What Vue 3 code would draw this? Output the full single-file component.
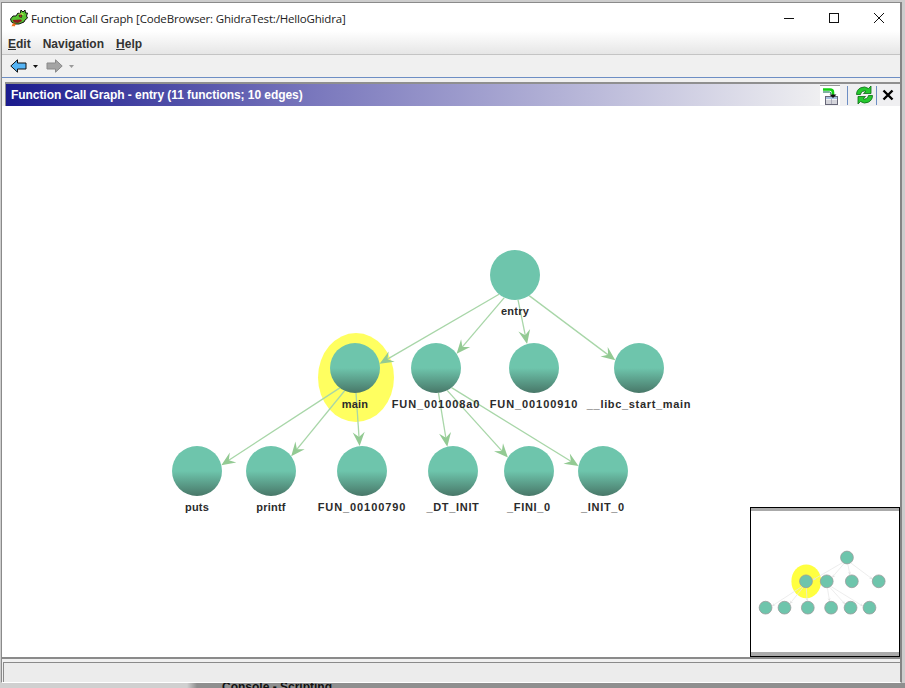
<script setup>
const nodes = {
  entry: { x: 515, y: 275, label: "entry", flat: true },
  main: { x: 355, y: 368, label: "main" },
  fun8a0: { x: 436, y: 368, label: "FUN_001008a0", kind: "addr" },
  fun910: { x: 534, y: 368, label: "FUN_00100910", kind: "addr" },
  libc: { x: 639, y: 368, label: "__libc_start_main", kind: "wide" },
  puts: { x: 197, y: 471, label: "puts" },
  printf: { x: 271, y: 471, label: "printf" },
  fun790: { x: 362, y: 471, label: "FUN_00100790", kind: "addr" },
  dtInit: { x: 453, y: 471, label: "_DT_INIT", kind: "wide" },
  fini: { x: 529, y: 471, label: "_FINI_0", kind: "wide" },
  init: { x: 603, y: 471, label: "_INIT_0", kind: "wide" },
};

const links = [
  ["entry", "main"],
  ["entry", "fun8a0"],
  ["entry", "fun910"],
  ["entry", "libc"],
  ["main", "puts"],
  ["main", "printf"],
  ["main", "fun790"],
  ["fun8a0", "dtInit"],
  ["fun8a0", "fini"],
  ["fun8a0", "init"],
];

const RADIUS = 25;
// edges aim at the middle of circle + label, not the circle itself
const LABEL_SHIFT = 10;

// distance along the ray to a circle: side -1 is where it enters, +1 where it leaves
function hitCircle(px, py, ux, uy, node, side) {
  const dx = node.x - px;
  const dy = node.y - py;
  const along = dx * ux + dy * uy;
  const off = dx * dx + dy * dy - along * along;
  return along + side * Math.sqrt(Math.max(0, RADIUS * RADIUS - off));
}

const edges = links.map(([from, to]) => {
  const a = nodes[from];
  const b = nodes[to];
  const ax = a.x;
  const ay = a.y + LABEL_SHIFT;
  const len = Math.hypot(b.x - a.x, b.y - a.y);
  const ux = (b.x - a.x) / len;
  const uy = (b.y - a.y) / len;
  const start = hitCircle(ax, ay, ux, uy, a, 1);
  const tipDist = hitCircle(ax, ay, ux, uy, b, -1);
  const tx = ax + ux * tipDist;
  const ty = ay + uy * tipDist;
  const point = (along, side) =>
    `${(tx - ux * along - uy * side).toFixed(1)},${(ty - uy * along + ux * side).toFixed(1)}`;
  return {
    id: from + to,
    x1: ax + ux * start,
    y1: ay + uy * start,
    x2: tx - ux * 8,
    y2: ty - uy * 8,
    arrow: [point(0, 0), point(14, 6), point(9, 0), point(14, -6)].join(" "),
  };
});

const nodeList = Object.values(nodes);
</script>

<template>
  <div class="desktop">
    <div class="window">
      <div class="titlebar">
        <svg class="dragon" width="18" height="18" viewBox="0 0 18 18">
          <path d="M0.500 10 L3 7 L6 7 L8 4 L10 5 L11 1 L13 3 L15 1 L15.500 4 L17.500 4 L16.500 7 L17.500 9 L15 11 L14 13 L9 15 L5 15 L1.500 13 Z" fill="#58c432" stroke="#111" />
          <path d="M8 5 L12 4 L14 6 L11 7 Z" fill="#b8e84a" />
          <path d="M9 6 L12 6 L11.500 8.500 L9.500 8 Z" fill="#c83a20" stroke="#111" stroke-width=".6" />
          <path d="M2.500 11 L11 10.500 L12 12 L8 14 L4 13.500 Z" fill="#8a1c1c" />
          <path d="M3 14 L1.500 17.500 L3 17 L4.500 17.500 L6 15 Z" fill="#f0701e" />
        </svg>
        <span class="title-text">Function Call Graph [CodeBrowser: GhidraTest:/HelloGhidra]</span>
        <div class="win-buttons">
          <svg width="12" height="12" viewBox="0 0 12 12"><path d="M1 6.500 H11" stroke="#111" /></svg>
          <svg width="12" height="12" viewBox="0 0 12 12"><rect x="1.500" y="1.500" width="9" height="9" fill="none" stroke="#111" /></svg>
          <svg width="12" height="12" viewBox="0 0 12 12"><path d="M1 1 L11 11 M11 1 L1 11" stroke="#111" /></svg>
        </div>
      </div>

      <div class="menubar">
        <span class="menu-item"><u>E</u>dit</span>
        <span class="menu-item">Navigation</span>
        <span class="menu-item"><u>H</u>elp</span>
      </div>

      <div class="toolbar">
        <svg width="17" height="14" viewBox="0 0 17 14">
          <path d="M.8 7 L7.500 .8 V4 H16 V10 H7.500 V13.200 Z" fill="#55b4f5" stroke="#111" />
        </svg>
        <svg class="caret" width="5" height="3" viewBox="0 0 5 3"><path d="M0 0 H5 L2.500 3 Z" fill="#111" /></svg>
        <svg class="forward" width="17" height="14" viewBox="0 0 17 14">
          <path d="M16.200 7 L9.500 .8 V4 H1 V10 H9.500 V13.200 Z" fill="#a4a4a4" stroke="#8a8a8a" />
        </svg>
        <svg class="caret" width="5" height="3" viewBox="0 0 5 3"><path d="M0 0 H5 L2.500 3 Z" fill="#999" /></svg>
      </div>

      <div class="panel-head">
        <div class="panel-title">Function Call Graph - entry (11 functions; 10 edges)</div>
        <div class="panel-actions">
          <div class="action-box">
            <svg width="17" height="18" viewBox="0 0 17 18">
              <rect x="3.500" y="9.500" width="12" height="8" fill="#f4f4f4" stroke="#667" />
              <rect x="4" y="10" width="11" height="2" fill="#a8c0e0" />
              <path d="M4 14 H15 M4 16 H15 M9.500 12 V17" stroke="#99a" stroke-width=".7" />
              <path d="M1 2.500 H8 Q11 2.500 11 5.500 V8" fill="none" stroke="#12d012" stroke-width="2.600" />
              <path d="M1 5 H7.500 Q9 5 9 7" fill="none" stroke="#064" />
              <path d="M7.500 7.500 H14.500 L11 11 Z" fill="#111" />
            </svg>
          </div>
          <div class="action-sep"></div>
          <svg class="refresh" width="19" height="20" viewBox="0 0 19 20">
            <path d="M1.500 9.500 A7.500 7.500 0 0 1 13.500 3.500 L16 1 V8.500 H8.500 L11 6.300 A4 4 0 0 0 5.500 9.500 Z" fill="#25c82e" stroke="#0a6a14" stroke-width=".8" />
            <path d="M17.500 10.500 A7.500 7.500 0 0 1 5.500 16.500 L3 19 V11.500 H10.500 L8 13.700 A4 4 0 0 0 13.500 10.500 Z" fill="#25c82e" stroke="#0a6a14" stroke-width=".8" />
          </svg>
          <div class="action-sep action-sep--last"></div>
          <svg class="close-x" width="12" height="12" viewBox="0 0 12 12">
            <path d="M1.500 1.500 L10.500 10.500 M10.500 1.500 L1.500 10.500" stroke="#000" stroke-width="2.400" />
          </svg>
        </div>
      </div>

      <div class="canvas">
        <svg class="graph" width="898" height="551" viewBox="2 106 898 551">
          <defs>
            <linearGradient id="node-shade" x1="0" y1="0" x2="0" y2="1">
              <stop offset="0.5" stop-color="#6ec5ac" />
              <stop offset="1" stop-color="#487768" />
            </linearGradient>
          </defs>
          <ellipse cx="356" cy="377.500" rx="38" ry="44.500" fill="#ffff60" />
          <g v-for="edge in edges" :key="edge.id">
            <line class="edge-line" :x1="edge.x1" :y1="edge.y1" :x2="edge.x2" :y2="edge.y2" />
            <polygon class="edge-arrow" :points="edge.arrow" />
          </g>
          <g v-for="node in nodeList" :key="node.label">
            <circle :cx="node.x" :cy="node.y" r="25" :fill="node.flat ? '#6ec5ac' : 'url(#node-shade)'" />
            <text
              class="node-label"
              :class="node.kind && 'node-label--' + node.kind"
              :x="node.x"
              :y="node.y + 40"
            >{{ node.label }}</text>
          </g>
        </svg>

        <div class="satellite">
          <svg width="148" height="141" viewBox="751 510.500 148 141">
            <g transform="translate(806 557) scale(.256) translate(-355 -275)">
              <ellipse cx="356" cy="368" rx="58" ry="66" fill="#ffff40" />
              <g v-for="edge in edges" :key="edge.id">
                <line class="mini-line" :x1="edge.x1" :y1="edge.y1" :x2="edge.x2" :y2="edge.y2" />
                <polygon class="mini-arrow" :points="edge.arrow" />
              </g>
              <circle
                v-for="node in nodeList"
                :key="node.label"
                :cx="node.x"
                :cy="node.y"
                r="25"
                fill="#6ec5ac"
                stroke="#9a9a9a"
                stroke-width="3"
              />
            </g>
          </svg>
        </div>
      </div>

      <div class="statusbar">
        <div class="status-box"></div>
      </div>
    </div>

    <div class="behind">
      <span class="behind-title">Console - Scripting</span>
    </div>
  </div>
</template>

<style scoped>
.desktop {
  width: 905px;
  height: 688px;
  overflow: hidden;
  display: flex;
  flex-direction: column;
  padding-top: 2px;
  box-sizing: border-box;
  background: #cdcdcd;
  font-family: "Liberation Sans", Arial, sans-serif;
}

.window {
  width: 901px;
  height: 681px;
  margin-left: 1px;
  box-sizing: border-box;
  flex-shrink: 0;
  display: flex;
  flex-direction: column;
  background: #f0f0f0;
  border-top: 1px solid #8a8a8a;
  border-left: 1px solid #8a8a8a;
  border-right: 2px solid #858585;
  border-bottom: 1px solid #fff;
}

.titlebar {
  height: 28px;
  flex-shrink: 0;
  display: flex;
  align-items: center;
  box-sizing: border-box;
  background: #fff;
  padding: 2px 0 0 8px;
}

.dragon {
  margin-right: 3px;
}

.title-text {
  font-family: "Open Sans", sans-serif;
  font-size: 11.5px;
  letter-spacing: -0.17px;
  color: #222;
}

.win-buttons {
  margin-left: auto;
  display: flex;
  gap: 33px;
  padding-right: 15px;
}

.menubar {
  height: 24px;
  flex-shrink: 0;
  display: flex;
  align-items: center;
  gap: 12px;
  padding: 3px 0 0 6px;
  box-sizing: border-box;
  background: linear-gradient(#fff, #e6e6e6);
  border-bottom: 1px solid #c4c4c4;
}

.menu-item {
  font-size: 12px;
  font-weight: 700;
  color: #333;
}

.toolbar {
  height: 23px;
  flex-shrink: 0;
  display: flex;
  align-items: center;
  box-sizing: border-box;
  padding-left: 8px;
  border-bottom: 1px solid #6d8ec4;
}

.caret {
  margin-left: 6px;
}

.forward {
  margin-left: 8px;
}

.panel-head {
  height: 24px;
  margin: 4px 0 0 3px;
  flex-shrink: 0;
  display: flex;
  box-sizing: border-box;
  border-top: 2px solid #8f8f8f;
  border-left: 1px solid #8f8f8f;
}

.panel-title {
  flex: 1;
  display: flex;
  align-items: center;
  padding-left: 5px;
  font-size: 12px;
  font-weight: 700;
  letter-spacing: -0.06px;
  color: #fff;
  background: linear-gradient(90deg, #1b1b8e, #7a78bd 38%, #efeff1);
}

.panel-actions {
  width: 80px;
  display: flex;
  align-items: center;
  background: #efeff1;
}

.action-box {
  width: 20px;
  height: 20px;
  display: flex;
  align-items: center;
  justify-content: center;
  background: #fff;
  border-top: 1px solid #999;
  box-sizing: border-box;
}

.action-sep {
  width: 1px;
  height: 19px;
  background: #6d8ec4;
  margin-left: 7px;
}

.action-sep--last {
  margin-left: 2px;
}

.refresh {
  margin-left: 7px;
}

.close-x {
  margin-left: 5px;
}

.canvas {
  flex: 1;
  position: relative;
  background: #fff;
  border-bottom: 2px solid #8a8a8a;
}

.graph {
  display: block;
}

.edge-line {
  stroke: #a8d6a8;
  stroke-width: 1.3;
}

.edge-arrow {
  fill: #93ca93;
}

.mini-line {
  stroke: #e8e8e8;
  stroke-width: 3;
}

.mini-arrow {
  fill: #e2e2e2;
}

.node-label {
  font-size: 11px;
  font-weight: 700;
  letter-spacing: 0.2px;
  fill: #2b2b2b;
  text-anchor: middle;
}

.node-label--addr {
  letter-spacing: 0.92px;
}

.node-label--wide {
  letter-spacing: 0.67px;
}

.satellite {
  position: absolute;
  right: 0;
  bottom: 0;
  width: 150px;
  height: 150px;
  box-sizing: border-box;
  border: 1px solid #000;
  background: #fff;
}

.satellite svg {
  display: block;
  border-top: 3px solid #aaa;
  border-bottom: 4px solid #aaa;
}

.statusbar {
  height: 23px;
  flex-shrink: 0;
  padding: 3px 0 0 1px;
  box-sizing: border-box;
  background: #f0f0f0;
}

.status-box {
  height: 100%;
  box-sizing: border-box;
  border-top: 1px solid #8a8a8a;
  border-left: 1px solid #8a8a8a;
  background: #ececec;
}

.behind {
  flex: 1;
  min-height: 0;
  overflow: hidden;
  padding-left: 222px;
  background: linear-gradient(90deg, #d0d0d0 187px, #8f8f8f 197px);
}

.behind-title {
  display: block;
  margin-top: -3px;
  font-size: 12px;
  font-weight: 700;
  color: #111;
}
</style>
